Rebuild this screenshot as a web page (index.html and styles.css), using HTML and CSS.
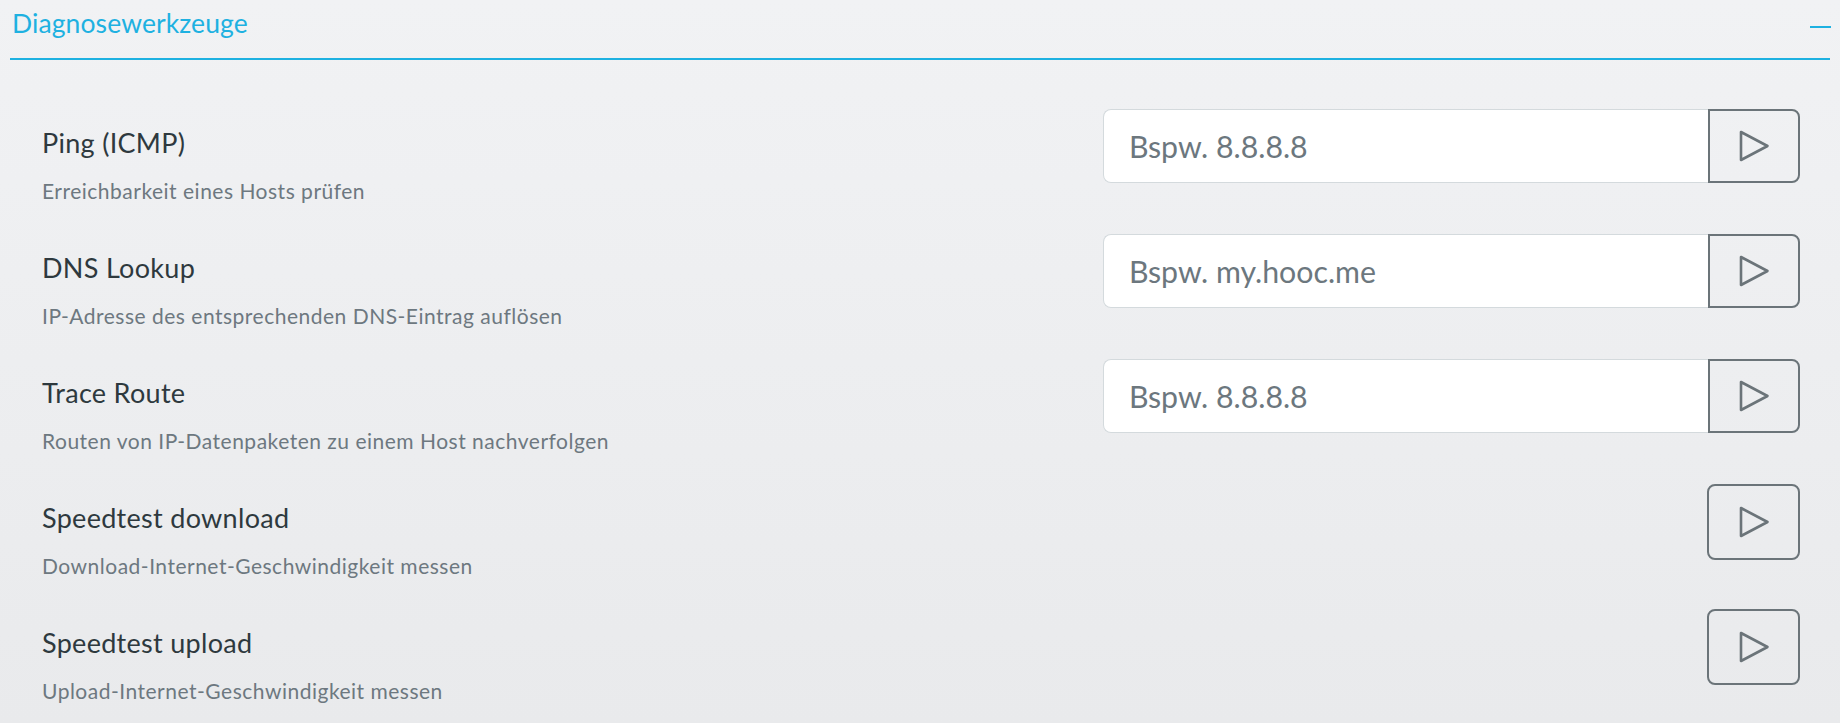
FILE: index.html
```html
<!DOCTYPE html>
<html lang="de">
<head>
<meta charset="utf-8">
<title>Diagnosewerkzeuge</title>
<link rel="stylesheet" href="styles.css">
</head>
<body>
<section class="panel">
  <header class="panel-head">
    <h2 class="panel-title">Diagnosewerkzeuge</h2>
    <span class="collapse" aria-label="Einklappen"></span>
  </header>
  <div class="rows">
    <div class="row">
      <div class="info">
        <div class="name">Ping (ICMP)</div>
        <div class="desc">Erreichbarkeit eines Hosts prüfen</div>
      </div>
      <div class="control">
        <input class="field" type="text" placeholder="Bspw. 8.8.8.8">
        <button class="run attached" type="button"><svg class="play" viewBox="0 0 34 36" width="34" height="36"><path d="M4 4 L30.5 18 L4 32 Z"/></svg></button>
      </div>
    </div>
    <div class="row">
      <div class="info">
        <div class="name">DNS Lookup</div>
        <div class="desc">IP-Adresse des entsprechenden DNS-Eintrag auflösen</div>
      </div>
      <div class="control">
        <input class="field" type="text" placeholder="Bspw. my.hooc.me">
        <button class="run attached" type="button"><svg class="play" viewBox="0 0 34 36" width="34" height="36"><path d="M4 4 L30.5 18 L4 32 Z"/></svg></button>
      </div>
    </div>
    <div class="row">
      <div class="info">
        <div class="name">Trace Route</div>
        <div class="desc">Routen von IP-Datenpaketen zu einem Host nachverfolgen</div>
      </div>
      <div class="control">
        <input class="field" type="text" placeholder="Bspw. 8.8.8.8">
        <button class="run attached" type="button"><svg class="play" viewBox="0 0 34 36" width="34" height="36"><path d="M4 4 L30.5 18 L4 32 Z"/></svg></button>
      </div>
    </div>
    <div class="row">
      <div class="info">
        <div class="name">Speedtest download</div>
        <div class="desc">Download-Internet-Geschwindigkeit messen</div>
      </div>
      <div class="control">
        <button class="run single" type="button"><svg class="play" viewBox="0 0 34 36" width="34" height="36"><path d="M4 4 L30.5 18 L4 32 Z"/></svg></button>
      </div>
    </div>
    <div class="row">
      <div class="info">
        <div class="name">Speedtest upload</div>
        <div class="desc">Upload-Internet-Geschwindigkeit messen</div>
      </div>
      <div class="control">
        <button class="run single" type="button"><svg class="play" viewBox="0 0 34 36" width="34" height="36"><path d="M4 4 L30.5 18 L4 32 Z"/></svg></button>
      </div>
    </div>
  </div>
</section>
</body>
</html>
```

FILE: styles.css
```css
html, body {
  margin: 0;
  height: 100%;
}
body {
  background: linear-gradient(to bottom, #f1f2f4 0%, #e9eaec 100%);
  font-family: Lato, "Noto Sans", sans-serif;
  overflow: hidden;
}
.panel {
  padding: 0 10px;
}
.panel-head {
  display: flex;
  justify-content: space-between;
  align-items: flex-start;
  padding: 8px 0 20px 2px;
  border-bottom: 2px solid #1eb1e1;
}
.panel-title {
  margin: 0;
  font-size: 26.5px;
  line-height: 30px;
  font-weight: 400;
  color: #1eb1e1;
  letter-spacing: 0.1px;
}
.collapse {
  display: block;
  width: 21px;
  height: 2px;
  margin-top: 18px;
  margin-right: -1px;
  background: #1eb1e1;
}
.rows {
  padding-top: 49px;
}
.row {
  display: flex;
  justify-content: space-between;
  align-items: flex-start;
  height: 125px;
  padding: 0 30px 0 32px;
}
.info {
  padding-top: 17.5px;
}
.name {
  font-size: 27px;
  line-height: 32px;
  letter-spacing: 0.3px;
  color: #2e393e;
}
.desc {
  margin-top: 20.5px;
  font-size: 21px;
  line-height: 24px;
  letter-spacing: 0.5px;
  color: #6d7880;
}
.control {
  display: flex;
}
.field {
  box-sizing: border-box;
  width: 605px;
  height: 74px;
  margin: 0;
  padding: 0 0 0 25px;
  border: 1.5px solid #d4dadd;
  border-right: none;
  border-radius: 8px 0 0 8px;
  background: #ffffff;
  font-family: Lato, "Noto Sans", sans-serif;
  font-size: 30.3px;
  color: #2e393e;
  outline: none;
}
.field::placeholder {
  color: #6c777e;
  opacity: 1;
}
.run {
  box-sizing: border-box;
  display: flex;
  align-items: center;
  justify-content: center;
  margin: 0;
  padding: 0;
  border: 2px solid #6b7479;
  background: transparent;
  cursor: pointer;
}
.run.attached {
  width: 92px;
  height: 74px;
  border-radius: 0 8px 8px 0;
}
.run.single {
  width: 93px;
  height: 76px;
  border-radius: 8px;
}
.play path {
  fill: none;
  stroke: #6b7479;
  stroke-width: 2.6;
  stroke-linejoin: round;
}
```
